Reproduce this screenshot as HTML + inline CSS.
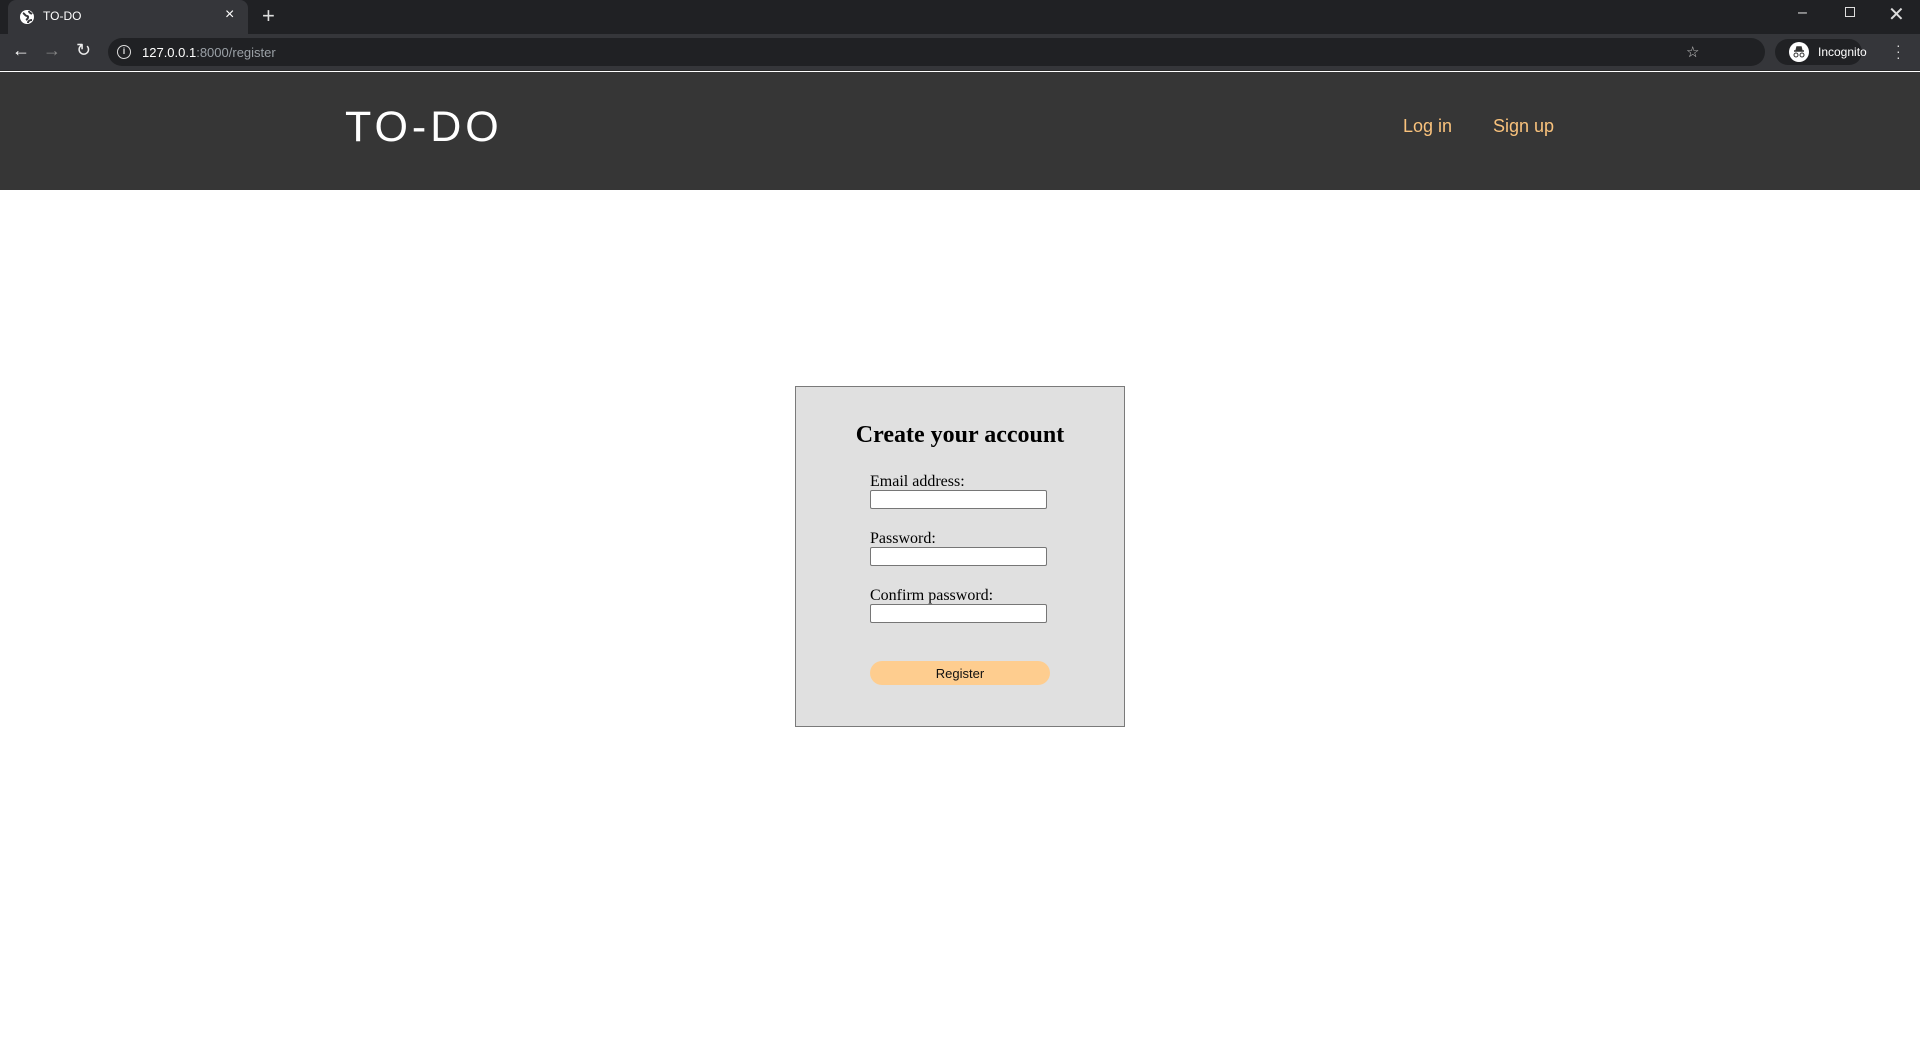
<!DOCTYPE html>
<html><head><meta charset="utf-8"><style>
*{margin:0;padding:0;box-sizing:border-box}
body{width:1920px;height:1040px;background:#fff;position:relative;overflow:hidden;font-family:"Liberation Sans",sans-serif}
.abs{position:absolute}
</style></head><body>
<!-- tab bar -->
<div class="abs" style="left:0;top:0;width:1920px;height:34px;background:#202124"></div>
<div class="abs" style="left:8px;top:0;width:240px;height:34px;background:#35363a;border-radius:8px 8px 0 0"></div>
<svg class="abs" style="left:19px;top:9px" width="16" height="16" viewBox="0 0 16 16"><circle cx="8" cy="8" r="7" fill="#fff"/><path d="M4 4c2 1 2 3 4 3s1 3 -1 4M10 2c0 2 2 2 3 3M9 14c0-2 2-3 4-3" stroke="#35363a" stroke-width="2" fill="none"/></svg>
<div class="abs" style="left:43px;top:9px;color:#fff;font-size:12px">TO-DO</div>
<div class="abs" style="left:225px;top:6px;color:#fff;font-size:16px">×</div>
<div class="abs" style="left:262px;top:3px;color:#ddd;font-size:22px;font-weight:300">+</div>
<div class="abs" style="left:1798px;top:4px;color:#ddd;font-size:16px">–</div>
<div class="abs" style="left:1845px;top:7px;width:10px;height:10px;border:1.5px solid #ddd"></div>
<div class="abs" style="left:1888px;top:2px;color:#ddd;font-size:20px">✕</div>
<!-- toolbar -->
<div class="abs" style="left:0;top:34px;width:1920px;height:37px;background:#35363a;border-bottom:1px solid #2a2a2a"></div>
<div class="abs" style="left:12px;top:40px;color:#fff;font-size:18px">←</div>
<div class="abs" style="left:43px;top:40px;color:#888;font-size:18px">→</div>
<div class="abs" style="left:76px;top:40px;color:#eee;font-size:18px">↻</div>
<div class="abs" style="left:108px;top:38px;width:1657px;height:28px;background:#202124;border-radius:14px"></div>
<div class="abs" style="left:117px;top:45px;width:14px;height:14px;border:1.5px solid #ddd;border-radius:50%;color:#ddd;font-size:9px;text-align:center;line-height:11px;font-weight:bold">i</div>
<div class="abs" style="left:142px;top:45px;font-size:13px;color:#fff">127.0.0.1<span style="color:#9aa0a6">:8000/register</span></div>
<div class="abs" style="left:1686px;top:43px;color:#ccc;font-size:15px">☆</div>
<div class="abs" style="left:1775px;top:39px;width:87px;height:26px;background:#202124;border-radius:13px"></div>
<div class="abs" style="left:1789px;top:42px;width:20px;height:20px;background:#fff;border-radius:50%"></div>
<svg class="abs" style="left:1791px;top:44px" width="16" height="16" viewBox="0 0 16 16"><path d="M3 7h10M5 7l1-4h4l1 4" stroke="#333" stroke-width="1.5" fill="#333"/><circle cx="5" cy="11" r="2" stroke="#333" fill="none"/><circle cx="11" cy="11" r="2" stroke="#333" fill="none"/></svg>
<div class="abs" style="left:1818px;top:45px;color:#fff;font-size:12px">Incognito</div>
<div class="abs" style="left:1896px;top:42px;color:#ddd;font-size:14px;line-height:6px">·<br>·<br>·</div>
<!-- nav -->
<div class="abs" style="left:0;top:72px;width:1920px;height:118px;background:#363636"></div>
<div class="abs" style="left:345px;top:102px;color:#fff;font-size:43px;letter-spacing:4px;font-weight:normal;line-height:50px">TO-DO</div>
<div class="abs" style="left:1403px;top:116px;color:#f9c27c;font-size:18px">Log in</div>
<div class="abs" style="left:1493px;top:116px;color:#f9c27c;font-size:18px">Sign up</div>
<!-- form -->
<div class="abs" style="left:795px;top:386px;width:330px;height:341px;background:#e0e0e0;border:1px solid #7a7a7a"></div>
<div class="abs" style="left:795px;top:422px;width:330px;text-align:center;font-family:'Liberation Serif',serif;font-weight:bold;font-size:24px">Create your account</div>
<div class="abs" style="left:870px;top:473px;font-family:'Liberation Serif',serif;font-size:16px">Email address:</div>
<div class="abs" style="left:870px;top:490px;width:177px;height:19px;background:#fff;border:1px solid #767676;border-radius:2px"></div>
<div class="abs" style="left:870px;top:530px;font-family:'Liberation Serif',serif;font-size:16px">Password:</div>
<div class="abs" style="left:870px;top:547px;width:177px;height:19px;background:#fff;border:1px solid #767676;border-radius:2px"></div>
<div class="abs" style="left:870px;top:587px;font-family:'Liberation Serif',serif;font-size:16px">Confirm password:</div>
<div class="abs" style="left:870px;top:604px;width:177px;height:19px;background:#fff;border:1px solid #767676;border-radius:2px"></div>
<div class="abs" style="left:870px;top:661px;width:180px;height:24px;background:#fecd8f;border-radius:12px;text-align:center;font-size:13px;line-height:25px;color:#111">Register</div>
</body></html>
